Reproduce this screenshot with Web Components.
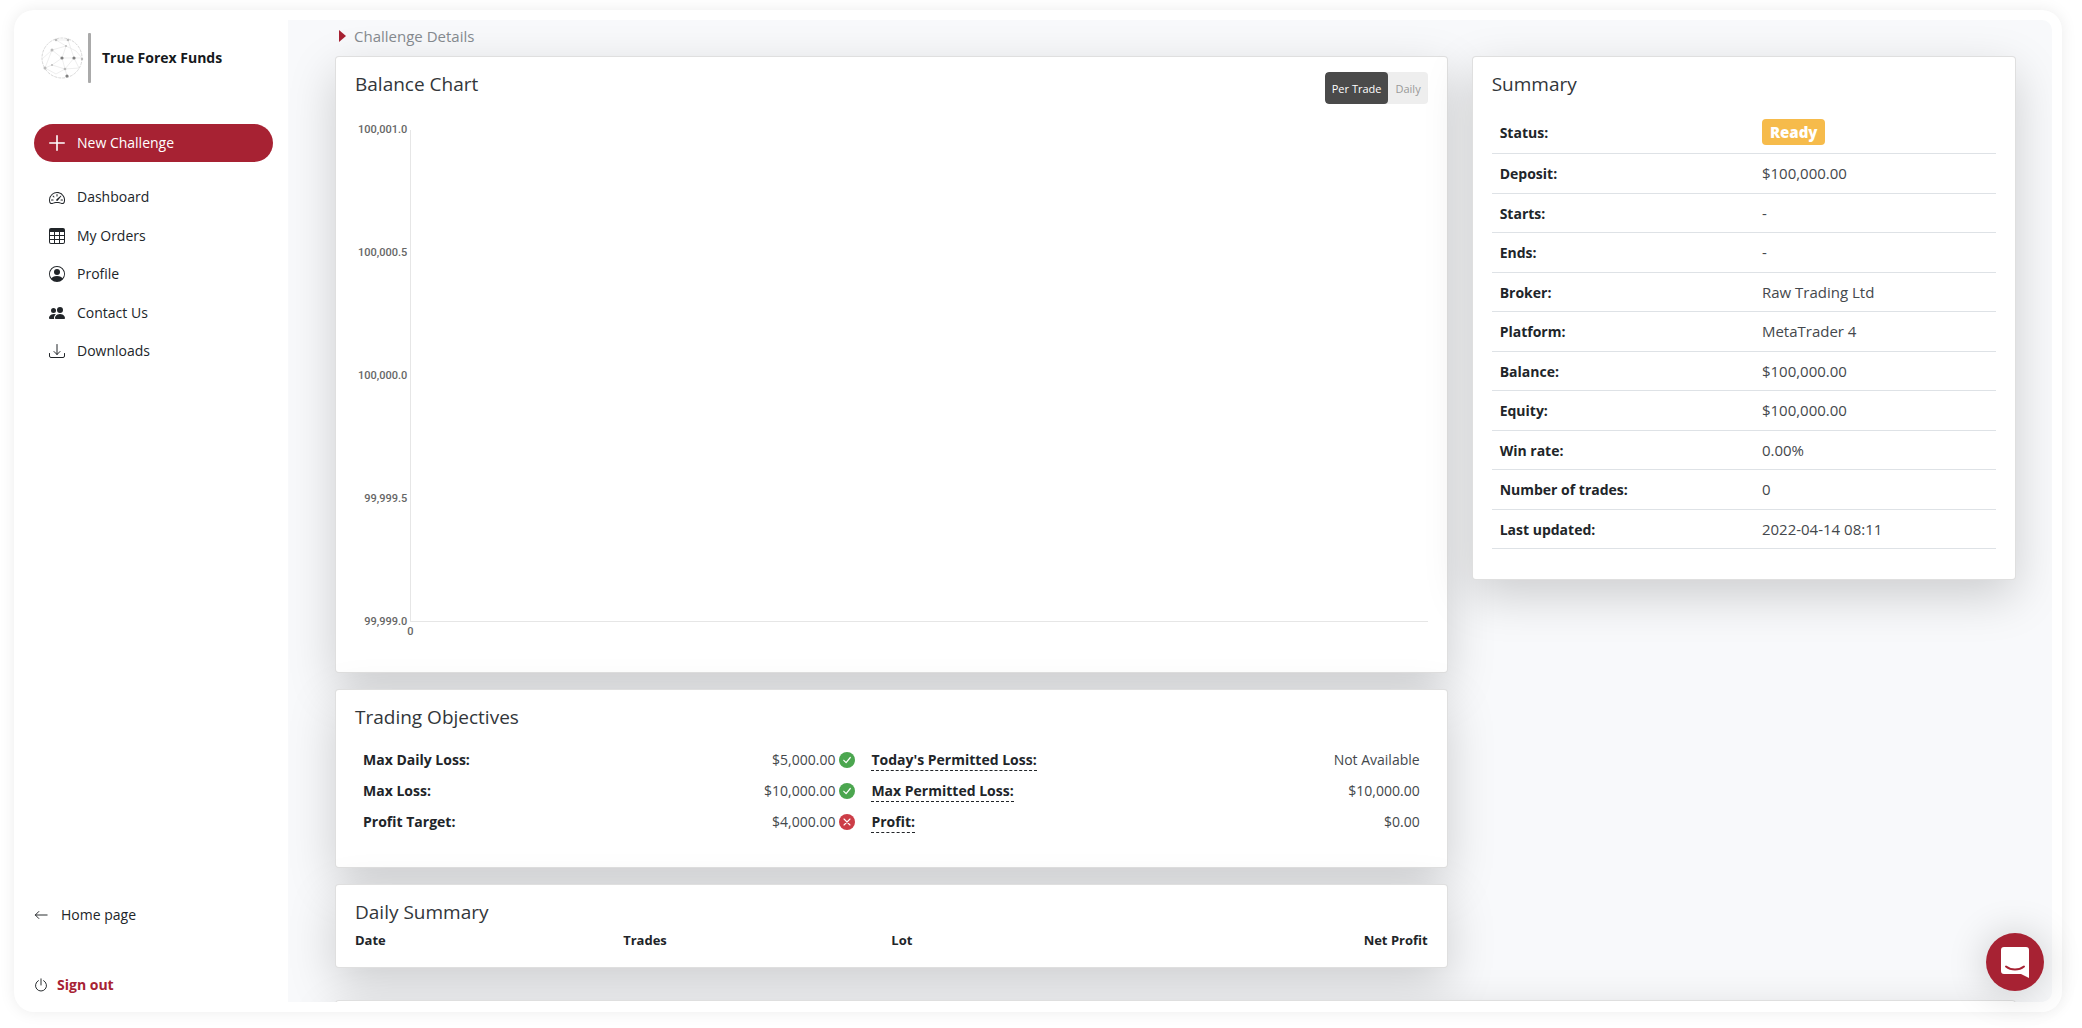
<!DOCTYPE html>
<html lang="en">
<head>
<meta charset="utf-8">
<title>Challenge Details</title>
<style>
html, body { height: 100%; }
body {
  margin: 0;
  box-sizing: border-box;
  padding: 10px 20px 16px 14px;
  background: #fff;
  font-family: "Open Sans", "Noto Sans", sans-serif;
  font-size: 14px;
  line-height: 1.6;
  color: #212529;
}
</style>
</head>
<body>
<app-shell>
  <side-bar slot="side"></side-bar>
  <page-head>Challenge Details</page-head>
  <card-row>
    <card-col style="--span: 8">
      <ui-card heading="Balance Chart">
        <period-toggle slot="actions"></period-toggle>
        <balance-chart></balance-chart>
      </ui-card>
      <ui-card heading="Trading Objectives"><objectives-table></objectives-table></ui-card>
      <ui-card heading="Daily Summary"><daily-table></daily-table></ui-card>
    </card-col>
    <card-col style="--span: 4">
      <ui-card heading="Summary"><summary-table></summary-table></ui-card>
    </card-col>
  </card-row>
  <card-row>
    <card-col style="--span: 12"><ui-card tall></ui-card></card-col>
  </card-row>
</app-shell>
<chat-launcher></chat-launcher>

<script>
const define = (name, html, setup) => {
  const tpl = document.createElement('template');
  tpl.innerHTML = html;
  customElements.define(name, class extends HTMLElement {
    constructor() {
      super();
      this.attachShadow({ mode: 'open' }).append(tpl.content.cloneNode(true));
    }
    connectedCallback() { if (setup) setup(this, this.shadowRoot); }
  });
};

const ICONS = {
  plus: '<path d="M8 .8v14.4M.8 8h14.4" fill="none" stroke="currentColor" stroke-width="1.6" stroke-linecap="round"/>',
  speedometer: '<path d="M8 4a.5.5 0 0 1 .5.5V6a.5.5 0 0 1-1 0V4.500A.5.5 0 0 1 8 4zM3.732 5.732a.5.5 0 0 1 .707 0l.915.914a.5.5 0 1 1-.708.708l-.914-.915a.5.5 0 0 1 0-.707zM2 10a.5.5 0 0 1 .5-.5h1.586a.5.5 0 0 1 0 1H2.500A.5.5 0 0 1 2 10zm9.500 0a.5.5 0 0 1 .5-.5h1.500a.5.5 0 0 1 0 1H12a.5.5 0 0 1-.5-.5zm.754-4.246a.389.389 0 0 0-.527-.020L7.547 9.310a.910.910 0 1 0 1.302 1.258l3.434-4.297a.389.389 0 0 0-.029-.518z"/><path fill-rule="evenodd" d="M0 10a8 8 0 1 1 15.547 2.661c-.442 1.253-1.845 1.602-2.932 1.250C11.309 13.488 9.475 13 8 13c-1.474 0-3.310.488-4.615.911-1.087.352-2.490.003-2.932-1.250A7.988 7.988 0 0 1 0 10zm8-7a7 7 0 0 0-6.603 9.329c.203.575.923.876 1.680.630C4.397 12.533 6.358 12 8 12s3.604.532 4.923.960c.757.245 1.477-.056 1.680-.631A7 7 0 0 0 8 3z"/>',
  table: '<path fill-rule="evenodd" d="M0 2a2 2 0 0 1 2-2h12a2 2 0 0 1 2 2v12a2 2 0 0 1-2 2H2a2 2 0 0 1-2-2V2zm15 2h-4v3h4V4zm0 4h-4v3h4V8zm0 4h-4v3h3a1 1 0 0 0 1-1v-2zm-5 3v-3H6v3h4zm-5 0v-3H1v2a1 1 0 0 0 1 1h3zm-4-4h4V8H1v3zm0-4h4V4H1v3zm5-3v3h4V4H6zm4 4H6v3h4V8z"/>',
  person: '<path d="M11 6a3 3 0 1 1-6 0 3 3 0 0 1 6 0z"/><path fill-rule="evenodd" d="M0 8a8 8 0 1 1 16 0A8 8 0 0 1 0 8zm8-7a7 7 0 0 0-5.468 11.370C3.242 11.226 4.805 10 8 10s4.757 1.225 5.468 2.370A7 7 0 0 0 8 1z"/>',
  people: '<path d="M7 14s-1 0-1-1 1-4 5-4 5 3 5 4-1 1-1 1H7zm4-6a3 3 0 1 0 0-6 3 3 0 0 0 0 6z"/><path d="M5.216 14A2.238 2.238 0 0 1 5 13c0-1.355.680-2.750 1.936-3.720A6.325 6.325 0 0 0 5 9c-4 0-5 3-5 4s1 1 1 1h4.216zM4.500 8a2.500 2.500 0 1 0 0-5 2.500 2.500 0 0 0 0 5z"/>',
  download: '<path d="M.5 10.500V13a1.500 1.500 0 0 0 1.500 1.500h12a1.500 1.500 0 0 0 1.500-1.500v-2.500M8 1.500v10M5 8.500l3 3 3-3" fill="none" stroke="currentColor" stroke-width="1" stroke-linecap="round" stroke-linejoin="round"/>',
  arrow: '<path d="M15 8H1.500M5.500 4l-4 4 4 4" fill="none" stroke="currentColor" stroke-width="1.100" stroke-linecap="round" stroke-linejoin="round"/>',
  power: '<path d="M8 1v7M5 3a6.300 6.300 0 1 0 6 0" fill="none" stroke="currentColor" stroke-width="1.100" stroke-linecap="round"/>',
  ok: '<circle cx="8" cy="8" r="8" fill="#4ba64f"/><path d="M4.800 8.300l2.300 2.400 4.200-5.200" fill="none" stroke="#fff" stroke-width="1.200" stroke-linecap="round" stroke-linejoin="round"/>',
  no: '<circle cx="8" cy="8" r="8" fill="#cc3d47"/><path d="M5 5l6 6M11 5l-6 6" fill="none" stroke="#fff" stroke-width="1.100" stroke-linecap="round"/>'
};
define('ui-icon', `<style>
  :host { display: inline-flex; flex: none; width: 16px; height: 16px; }
  svg { width: 100%; height: 100%; fill: currentColor; }
</style><svg viewBox="0 0 16 16" aria-hidden="true"></svg>`,
  (el, root) => { root.querySelector('svg').innerHTML = ICONS[el.getAttribute('name')] || ''; });

define('app-shell', `<style>
  :host {
    display: flex; box-sizing: border-box; height: 100%;
    padding: 10px; border-radius: 20px; background: #fff;
    box-shadow: 0 0 16px rgba(0,0,0,.08);
  }
  aside { flex: none; width: 264px; display: flex; }
  main {
    flex: 1; min-width: 0; overflow: hidden; box-sizing: border-box;
    padding: 0 36px 0 47px; background: #f8f9fb; border-radius: 0 10px 10px 0;
  }
</style><aside><slot name="side"></slot></aside><main><slot></slot></main>`);

define('brand-logo', `<style>
  :host { display: flex; align-items: center; gap: 10px; padding-left: 6px; font-weight: 700; color: #16191c; }
  svg { flex: none; width: 52px; height: 52px; }
</style>
<svg viewBox="0 0 52 52" aria-hidden="true">
  <circle cx="22" cy="26" r="20" fill="none" stroke="#d8d8d8" stroke-width="1" stroke-dasharray="3 1"/>
  <path d="M12 18L26 14L36 19M12 18L22 26L34 26L42 26M12 18L5 36M26 14L16 8L28 8L34 26M22 26L25 37L34 26M22 26L12 33L25 37L27 44M2 27L12 18M12 33L5 36L16 42L25 37L39 36L34 26M26 14L22 26M36 19L42 26" fill="none" stroke="#e6e6e6" stroke-width=".7"/>
  <g fill="#bbb"><circle cx="12" cy="18" r="1.500"/><circle cx="16" cy="8" r="1.300"/><circle cx="28" cy="8" r="1.300"/><circle cx="26" cy="14" r="1"/><circle cx="5" cy="36" r="1.500"/><circle cx="25" cy="37" r="1.300"/><circle cx="12" cy="33" r="1"/><circle cx="42" cy="27" r="1.200"/></g>
  <g fill="#808080"><circle cx="22" cy="26" r="1.600"/><circle cx="34" cy="26" r="1.600"/><circle cx="27" cy="44" r="1.600"/></g>
  <rect x="48" y="1" width="3" height="50" rx="1" fill="#aaa"/>
</svg><span>True Forex Funds</span>`);

define('nav-item', `<style>
  :host { display: block; }
  a {
    display: flex; align-items: center; gap: 12px; padding: 8px 15px;
    border-radius: 24px; color: inherit; text-decoration: none;
  }
  :host([primary]) a { background: #a72233; color: #fff; }
  :host([compact]) a { padding: 8px 0 6px; gap: 13px; }
  :host([danger]) a { color: #a72233; font-weight: 700; gap: 9px; }
  ui-icon { color: #212529; }
  :host([primary]) ui-icon { color: #fff; }
  :host([compact]) ui-icon { width: 14px; height: 14px; }
</style><a href="#"><ui-icon></ui-icon><slot></slot></a>`,
  (el, root) => {
    const icon = document.createElement('ui-icon');
    icon.setAttribute('name', el.getAttribute('icon'));
    root.querySelector('ui-icon').replaceWith(icon);
  });

define('side-bar', `<style>
  :host { display: flex; flex-direction: column; flex: 1; box-sizing: border-box; padding: 12px 15px 0 10px; }
  nav { margin-top: 16px; flex: 1; }
  brand-logo { margin-bottom: 40px; }
  footer { display: flex; flex-direction: column; gap: 33px; }
</style>
<brand-logo></brand-logo>
<nav-item primary icon="plus">New Challenge</nav-item>
<nav>
  <nav-item icon="speedometer">Dashboard</nav-item>
  <nav-item icon="table">My Orders</nav-item>
  <nav-item icon="person">Profile</nav-item>
  <nav-item icon="people">Contact Us</nav-item>
  <nav-item icon="download">Downloads</nav-item>
</nav>
<footer>
  <nav-item compact icon="arrow">Home page</nav-item>
  <nav-item compact danger icon="power">Sign out</nav-item>
</footer>`);

define('page-head', `<style>
  :host {
    display: flex; align-items: center; gap: 8px; box-sizing: border-box; height: 36px;
    padding: 0 0 4px 4px; font-size: 15px; color: #868b90;
  }
  i { border: solid transparent; border-width: 6px 0 6px 7px; border-left-color: #a72233; }
</style><i></i><slot></slot>`);

define('card-row', `<style>
  :host { display: flex; align-items: flex-start; margin: 0 -12px 32px; }
</style><slot></slot>`);

define('card-col', `<style>
  :host {
    display: flex; flex-direction: column; gap: 16px; box-sizing: border-box;
    flex: 0 0 calc(100% * var(--span) / 12); padding: 0 12px;
  }
</style><slot></slot>`);

define('ui-card', `<style>
  :host {
    display: block; box-sizing: border-box; padding: 15px 19px;
    background: #fff; border: 1px solid rgba(0,0,0,.125); border-radius: 4px;
    box-shadow: 0 16px 48px rgba(0,0,0,.175);
  }
  :host([tall]) { min-height: 240px; }
  header { display: flex; justify-content: space-between; align-items: flex-start; }
  h2 { margin: 0; font-size: 19px; line-height: 24px; font-weight: 500; color: #32363a; }
</style><header><h2></h2><slot name="actions"></slot></header><slot></slot>`,
  (el, root) => { root.querySelector('h2').textContent = el.getAttribute('heading') || ''; });

define('period-toggle', `<style>
  :host { display: flex; border-radius: 4px; background: #eee; overflow: hidden; }
  button {
    border: 0; padding: 0 7px; height: 32px; border-radius: 4px; background: none;
    font: 11px "Open Sans", "Noto Sans", sans-serif; color: #999;
  }
  button[aria-pressed=true] { background: #4a4a4a; color: #fff; }
</style><button type="button" aria-pressed="true">Per Trade</button><button type="button" aria-pressed="false">Daily</button>`);

define('balance-chart', `<style>
  :host {
    display: grid; grid-template-columns: auto 1fr; column-gap: 3px;
    padding: 18px 0 23px 3px;
    font: 500 11px/16px Roboto, "Liberation Sans", sans-serif; color: #666;
  }
  .y { display: flex; flex-direction: column; justify-content: space-between; text-align: right; height: 508px; }
  .plot { margin: 8px 0; border: solid #e6e6e6; border-width: 0 0 1px 1px; }
  .x { grid-column: 2; margin-left: -3px; line-height: 4px; }
</style>
<div class="y"><span>100,001.0</span><span>100,000.5</span><span>100,000.0</span><span>99,999.5</span><span>99,999.0</span></div>
<div class="plot"></div>
<div class="x">0</div>`);

define('objectives-table', `<style>
  :host { display: block; padding: 15px 0; }
  table { width: 100%; border-collapse: collapse; }
  th, td { padding: 4px 8px; line-height: 23px; }
  th { text-align: left; font-weight: 700; }
  td { text-align: right; color: #44484c; }
  th:first-child { width: 25%; }
  td:nth-child(2) { width: 22.4%; }
  td div { display: flex; align-items: center; justify-content: flex-end; gap: 4px; }
  abbr { display: inline-block; line-height: 20px; border-bottom: 1px dashed #212529; }
</style><table><tbody></tbody></table>`,
  (el, root) => {
    root.querySelector('tbody').innerHTML = [
      ['Max Daily Loss:', '$5,000.00', 'ok', "Today's Permitted Loss:", 'Not Available'],
      ['Max Loss:', '$10,000.00', 'ok', 'Max Permitted Loss:', '$10,000.00'],
      ['Profit Target:', '$4,000.00', 'no', 'Profit:', '$0.00']
    ].map(([a, b, i, c, d]) => `<tr><th scope="row">${a}</th><td><div><span>${b}</span><ui-icon name="${i}"></ui-icon></div></td><th scope="row"><abbr>${c}</abbr></th><td>${d}</td></tr>`).join('');
  });

define('daily-table', `<style>
  :host { display: block; }
  table { width: 100%; border-collapse: collapse; table-layout: fixed; }
  th { padding: 4px 0 0; text-align: left; font-size: 13px; line-height: 24px; font-weight: 700; }
  th:last-child { text-align: right; }
</style><table><thead><tr><th scope="col">Date</th><th scope="col">Trades</th><th scope="col">Lot</th><th scope="col">Net Profit</th></tr></thead></table>`);

define('summary-table', `<style>
  :host { display: block; padding: 15px 0; }
  table { width: 100%; border-collapse: separate; border-spacing: 0; font-size: 15px; line-height: 1.5; }
  th, td { padding: 8px; border-bottom: 1px solid #dee2e6; text-align: left; vertical-align: baseline; }
  th { width: 52%; box-sizing: border-box; font-size: 14px; font-weight: 700; }
  td { color: #44484c; }
  .badge { display: block; width: max-content; padding: 0 8px; border-radius: 4px; background: #f6bb4b; color: #fff; font-weight: 800; line-height: 26px; }
</style><table><tbody></tbody></table>`,
  (el, root) => {
    root.querySelector('tbody').innerHTML = [
      ['Status:', '<span class="badge">Ready</span>'],
      ['Deposit:', '$100,000.00'],
      ['Starts:', '-'],
      ['Ends:', '-'],
      ['Broker:', 'Raw Trading Ltd'],
      ['Platform:', 'MetaTrader 4'],
      ['Balance:', '$100,000.00'],
      ['Equity:', '$100,000.00'],
      ['Win rate:', '0.00%'],
      ['Number of trades:', '0'],
      ['Last updated:', '2022-04-14 08:11']
    ].map(([k, v]) => `<tr><th scope="row">${k}</th><td>${v}</td></tr>`).join('');
  });

define('chat-launcher', `<style>
  :host { position: fixed; right: 38px; bottom: 37px; }
  button {
    display: flex; align-items: center; justify-content: center; width: 58px; height: 58px; padding: 0;
    border: 0; border-radius: 50%; background: #a72233; box-shadow: 0 2px 40px rgba(0,0,0,.2);
  }
</style><button type="button" aria-label="Open chat">
<svg width="28" height="31" viewBox="0 0 28 31" aria-hidden="true"><path d="M3 0h22a3 3 0 0 1 3 3v28l-8-4H3a3 3 0 0 1-3-3V3a3 3 0 0 1 3-3z" fill="#fff"/><path d="M5 19.500c5 4 13 4 18 0" fill="none" stroke="#a72233" stroke-width="2" stroke-linecap="round"/></svg>
</button>`);
</script>
</body>
</html>
